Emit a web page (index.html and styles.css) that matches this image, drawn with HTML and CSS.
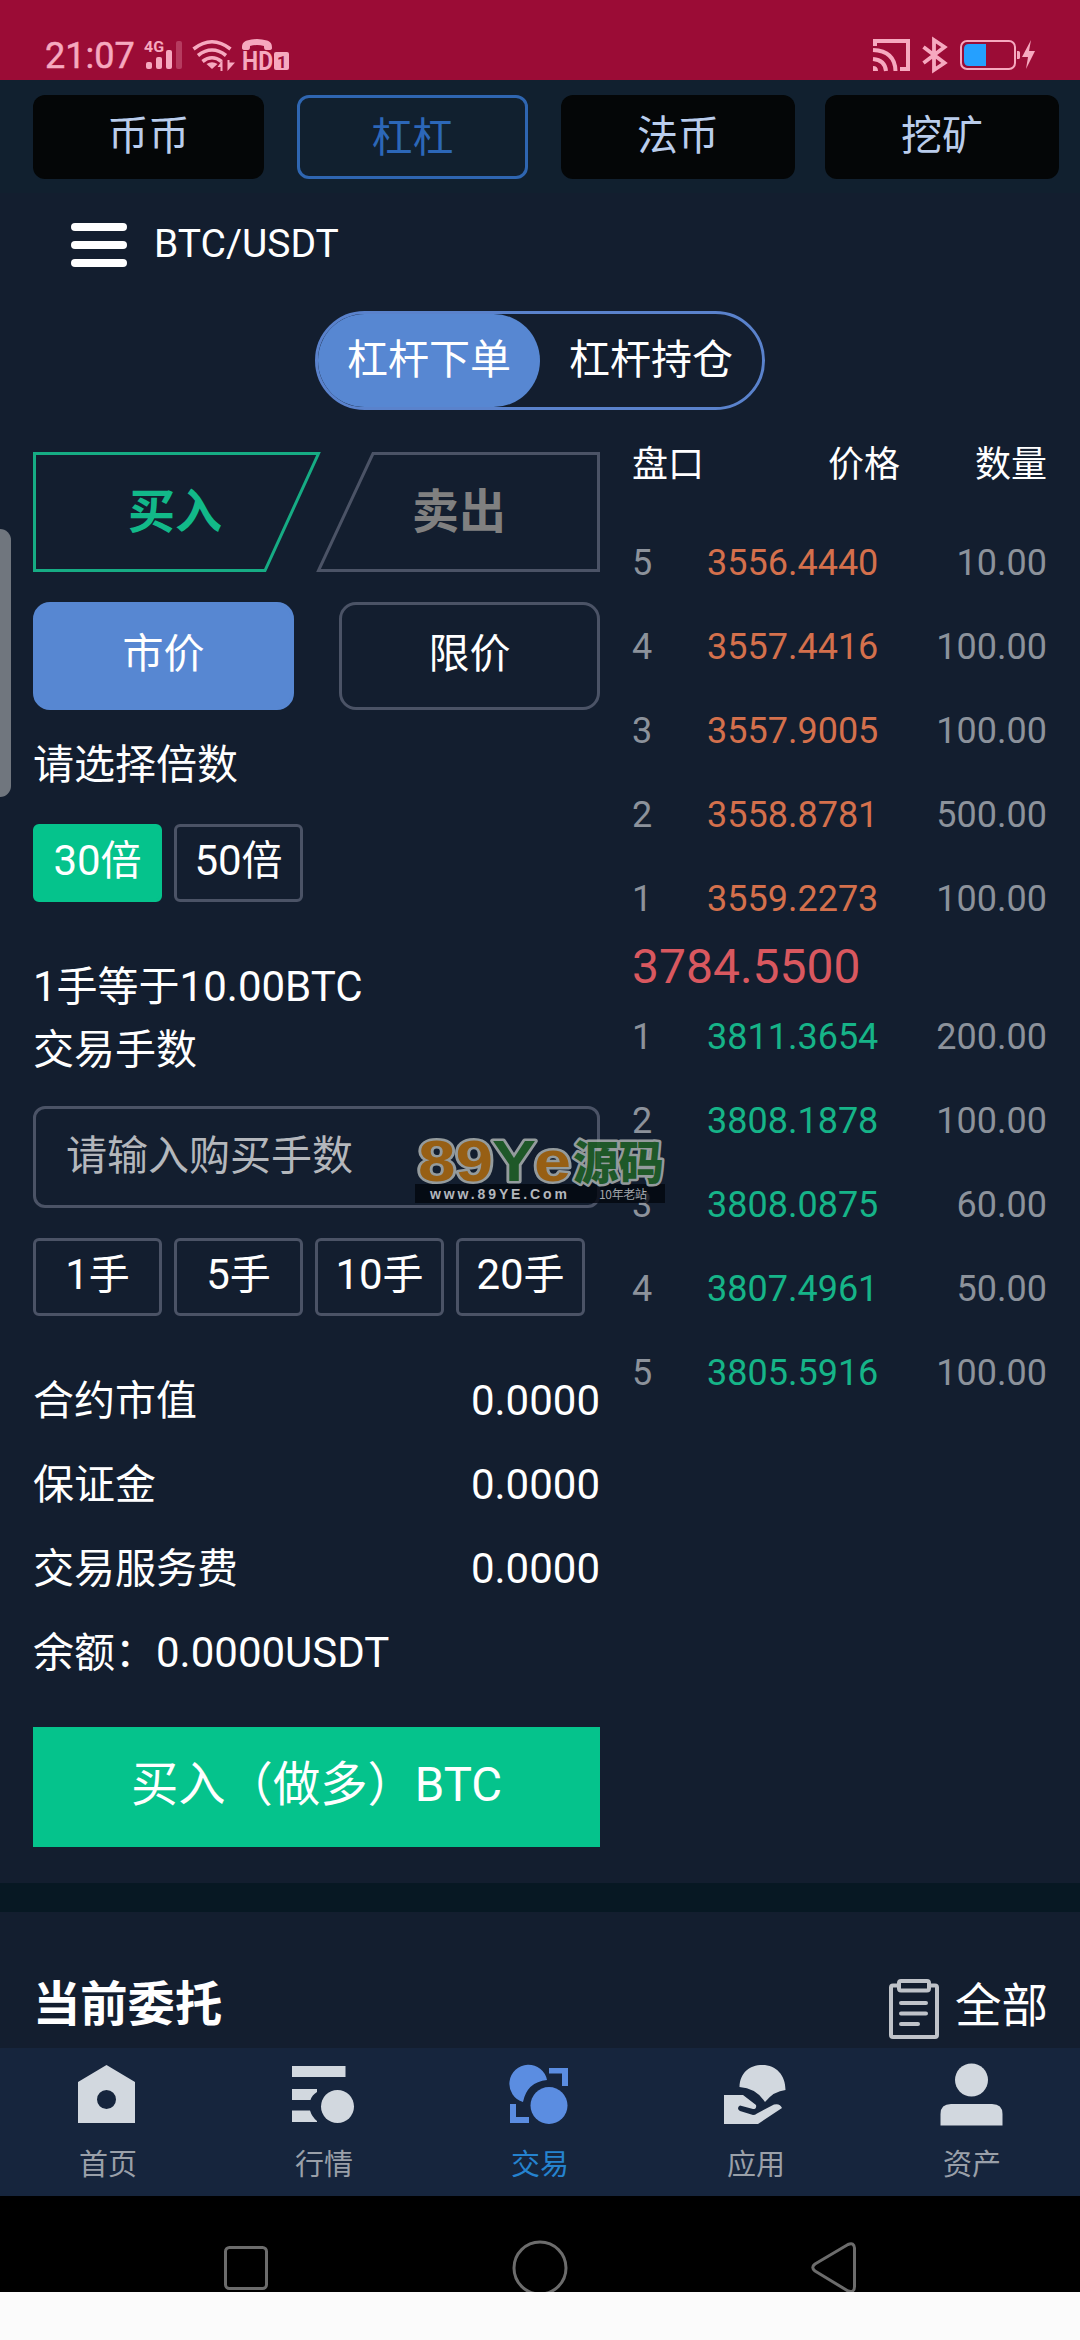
FILE: index.html
```html
<!DOCTYPE html>
<html lang="zh-CN">
<head>
<meta charset="utf-8">
<title>BTC/USDT</title>
<link rel="stylesheet" href="styles.css">
</head>
<body>
<div class="screen">
  <header class="status">
    <span class="clock">21:07</span>
    <svg class="status-left" viewBox="142 36 150 38" width="150" height="38">
      <g fill="#f6a9bf">
        <text class="net" x="144" y="51.500" textLength="20" lengthAdjust="spacingAndGlyphs">4G</text>
        <rect x="146" y="62" width="6" height="7" rx="2"/>
        <rect x="156" y="57" width="6" height="12" rx="2"/>
        <rect x="166" y="50" width="6" height="19" rx="2"/>
        <rect x="176" y="41" width="6" height="28" rx="2" opacity=".3"/>
        <path d="M206.500 64q5.500-3.500 11 0l-5.500 5z"/>
        <path d="M217.500 67l5-7v11h-2v-4zM235 62.500l-7.500 8.500V60h2v2.500z"/>
        <rect x="274" y="52" width="15" height="18" rx="2"/>
        <text class="hd" x="242" y="70" textLength="31" lengthAdjust="spacingAndGlyphs">HD</text>
        <path d="M242 48c0-4 1-6 5-7.500q10-3 20 0c4 1.500 5 3.500 5 7.500q0 2-3 2h-3q-2 0-2-3v-1q-7-2-14 0v1q0 3-2 3h-3q-3 0-3-2z"/>
      </g>
      <g fill="none" stroke="#f6a9bf" stroke-width="3.600">
        <path d="M193.500 49q18.500-14.500 37 0M198 55.500q14-11 28 0M202.500 61.500q9.500-7.500 19 0"/>
      </g>
      <text class="sim" x="277" y="67.500" fill="#9b0c36">1</text>
    </svg>
    <svg class="status-right" viewBox="872 36 164 38" width="164" height="38">
      <g fill="none" stroke="#f6a9bf" stroke-width="4">
        <path d="M875 46v-5h33v28h-8"/>
        <path d="M873 50q22 1 22.500 21M873 59q12 1 13 12"/>
        <path stroke-width="3.800" d="M923.500 47l21 16-10.500 7V40l10.500 7-21 16"/>
        <rect x="961" y="41" width="54" height="28" rx="6" stroke-width="2"/>
      </g>
      <path fill="#f6a9bf" d="M873 66q5 0 5 5h-5zM1017 51h1.500q1.500 0 1.500 1.500v5q0 1.500-1.500 1.500h-1.500zM1031 40l-9 17h6l-2 12 9-18h-6z"/>
      <path fill="#25a0ff" d="M986 44v22h-17q-5 0-5-5V49q0-5 5-5z"/>
    </svg>
  </header>

  <nav class="markets">
    <a class="market">币币</a>
    <a class="market market-on">杠杠</a>
    <a class="market">法币</a>
    <a class="market">挖矿</a>
  </nav>

  <main class="page">
    <div class="pair">
      <div class="burger"><i></i><i></i><i></i></div>
      <span>BTC/USDT</span>
    </div>
    <div class="switch">
      <span class="switch-item switch-on">杠杆下单</span>
      <span class="switch-item">杠杆持仓</span>
    </div>

    <div class="columns">
      <section class="order">
        <div class="sides">
          <div class="side buy">
            <svg viewBox="0 0 288 120" width="288" height="120"><path d="M1.500 1.500H285.500L232 118.500H1.500z"/></svg>
            <span>买入</span>
          </div>
          <div class="side sell">
            <svg viewBox="0 0 284 120" width="284" height="120"><path d="M57 1.500H282.500V118.500H2.500z"/></svg>
            <span>卖出</span>
          </div>
        </div>
        <div class="types">
          <button class="type type-on">市价</button>
          <button class="type">限价</button>
        </div>
        <p class="label">请选择倍数</p>
        <div class="chips">
          <button class="chip chip-on"><span class="num">30</span>倍</button>
          <button class="chip"><span class="num">50</span>倍</button>
        </div>
        <div class="notes">
          <p><span class="num">1</span>手等于<span class="num">10.00BTC</span></p>
          <p>交易手数</p>
        </div>
        <div class="field">请输入购买手数</div>
        <div class="chips lots">
          <button class="chip"><span class="num">1</span>手</button>
          <button class="chip"><span class="num">5</span>手</button>
          <button class="chip"><span class="num">10</span>手</button>
          <button class="chip"><span class="num">20</span>手</button>
        </div>
        <div class="totals">
          <div class="total"><span>合约市值</span><b>0.0000</b></div>
          <div class="total"><span>保证金</span><b>0.0000</b></div>
          <div class="total"><span>交易服务费</span><b>0.0000</b></div>
          <div class="total"><span>余额：<span class="num">0.0000USDT</span></span></div>
        </div>
        <button class="submit">买入（做多）BTC</button>
      </section>

      <section class="book">
        <div class="book-head"><span>盘口</span><span>价格</span><span>数量</span></div>
        <div class="row ask"><span>5</span><b>3556.4440</b><span>10.00</span></div>
        <div class="row ask"><span>4</span><b>3557.4416</b><span>100.00</span></div>
        <div class="row ask"><span>3</span><b>3557.9005</b><span>100.00</span></div>
        <div class="row ask"><span>2</span><b>3558.8781</b><span>500.00</span></div>
        <div class="row ask"><span>1</span><b>3559.2273</b><span>100.00</span></div>
        <div class="last">3784.5500</div>
        <div class="row bid"><span>1</span><b>3811.3654</b><span>200.00</span></div>
        <div class="row bid"><span>2</span><b>3808.1878</b><span>100.00</span></div>
        <div class="row bid"><span>3</span><b>3808.0875</b><span>60.00</span></div>
        <div class="row bid"><span>4</span><b>3807.4961</b><span>50.00</span></div>
        <div class="row bid"><span>5</span><b>3805.5916</b><span>100.00</span></div>
      </section>
    </div>
  </main>

  <section class="current">
    <h2>当前委托</h2>
    <a class="all">
      <svg viewBox="0 0 50 60" width="50" height="60" fill="none" stroke="#bfc3c9" stroke-width="4" stroke-linejoin="round" stroke-linecap="round">
        <path d="M8 6.500H4q-2 0-2 2V56q0 2 2 2H46q2 0 2-2V8.500q0-2-2-2H42"/>
        <rect x="10" y="2" width="30" height="9.500" rx="2"/>
        <path d="M12 24H37M12 34.500H37M12 45H29"/>
      </svg>
      <span>全部</span>
    </a>
  </section>

  <nav class="tabs">
    <a class="tab">
      <svg viewBox="76 2062 64 64" width="64" height="64"><path fill="#d2d8df" fill-rule="evenodd" d="M106.500 2065L135 2082V2123H78V2082zM106.500 2090a9.500 9.500 0 1 0 0 19a9.500 9.500 0 1 0 0-19z"/></svg>
      <span>首页</span>
    </a>
    <a class="tab">
      <svg viewBox="292 2062 64 64" width="64" height="64"><g fill="#d2d8df"><path d="M292 2066H345.500V2077H292zM292 2089H317V2092Q312 2095 310.500 2100H292zM292 2110.500H310Q312 2117 317 2121V2122H292z"/><circle cx="337.500" cy="2106.500" r="16.500"/></g></svg>
      <span>行情</span>
    </a>
    <a class="tab tab-on">
      <svg viewBox="507 2062 64 64" width="64" height="64"><g fill="#5b8de1"><path d="M522 2102A19 19 0 1 1 546 2080Q526 2082 522 2102z"/><circle cx="548" cy="2105.500" r="18.500"/><path d="M548 2068H567V2086H561V2073.500H548zM509 2104H515V2117H528V2123H509z"/></g></svg>
      <span>交易</span>
    </a>
    <a class="tab">
      <svg viewBox="723 2062 64 64" width="64" height="64"><g fill="#d2d8df"><path d="M738.500 2087C739 2073 748 2065 761.500 2065C775 2065 784.500 2075 784.500 2090Q773 2091 764 2102Q755 2088 738.500 2087z"/><path d="M723 2095H742L755 2105Q756 2109 752 2109L739 2105.500Q735 2108 739 2111L752 2115Q754 2115 756 2113.500L773 2104.500Q779 2103 781 2108L757 2124H723z"/></g></svg>
      <span>应用</span>
    </a>
    <a class="tab">
      <svg viewBox="939 2062 64 64" width="64" height="64"><g fill="#d2d8df"><circle cx="970.500" cy="2080" r="16.500"/><path d="M939.500 2125.500V2114Q939.500 2104 950 2104H991Q1001.500 2104 1001.500 2114V2125.500z"/></g></svg>
      <span>资产</span>
    </a>
  </nav>

  <footer class="sysnav">
    <svg viewBox="0 0 1080 100" width="1080" height="100" fill="none" stroke="#6c6c6c" stroke-width="3">
      <rect x="225.500" y="51.500" width="41" height="41" rx="4"/>
      <circle cx="540" cy="72" r="26"/>
      <path stroke-linejoin="round" d="M848 48.500L815 68Q810.500 71.500 815 75L848 95Q854.500 97 854.500 90.500V52Q854 46 848 48.500z"/>
    </svg>
  </footer>

  <div class="edge-handle"></div>

  <svg class="watermark" viewBox="0 0 252 70" width="252" height="70">
    <rect x="0" y="49" width="250" height="19" fill="#03070f" opacity=".9"/>
    <g class="wm-logo">
      <text class="wm-orange" x="3" y="46" textLength="75" lengthAdjust="spacingAndGlyphs">89</text>
      <text class="wm-green" x="77" y="46" textLength="44" lengthAdjust="spacingAndGlyphs">Y</text>
      <text class="wm-orange" x="119" y="46" textLength="37" lengthAdjust="spacingAndGlyphs">e</text>
      <text class="wm-green wm-cjk" x="158" y="44" textLength="91" lengthAdjust="spacingAndGlyphs">源码</text>
    </g>
    <text class="wm-url" x="15" y="64" textLength="137">www.89YE.Com</text>
    <text class="wm-note" x="184" y="64" textLength="48">10年老站</text>
  </svg>
</div>
</body>
</html>
```
FILE: styles.css
```css
* { box-sizing: border-box; }
body {
  margin: 0;
  background: #fbfbfb;
  color: #fff;
  font-family: Roboto, "Noto Sans CJK SC", sans-serif;
  font-size: 41px;
}
p, h2 { margin: 0; }
svg { display: block; flex: none; overflow: visible; }
button {
  margin: 0;
  padding: 0 0 3px;
  border: 3px solid #4b5366;
  background: none;
  color: #fff;
  font: inherit;
  line-height: 1;
}
.num { font-size: 42px; line-height: 0; }
.screen {
  position: relative;
  width: 1080px;
  height: 2340px;
  overflow: hidden;
  display: flex;
  flex-direction: column;
}

/* status bar */
.status {
  height: 80px;
  padding: 34px 44px 0 45px;
  background: #9b0c36;
  display: flex;
  flex: none;
}
.clock { width: 97px; font-size: 36px; line-height: 45px; color: #f6a9bf; white-space: nowrap; -webkit-text-stroke: .5px #f6a9bf; }
.status-left { margin-top: 2px; }
.status-right { margin: 2px 0 0 auto; }
.net { font: 700 14px Roboto, sans-serif; }
.hd { font: 700 25px Roboto, sans-serif; }
.sim { font: 700 17px Roboto, sans-serif; }

/* market tabs */
.markets {
  height: 113px;
  padding: 15px 21px 0 33px;
  background: #11202f;
  display: grid;
  grid-template-columns: 264px 264px 264px 234px;
  flex: none;
}
.market {
  height: 84px;
  margin-right: 30px;
  border-radius: 12px;
  background: #040607;
  color: #bacdec;
  line-height: 83px;
  text-align: center;
}
.market:nth-child(-n+2) { margin-right: 33px; }
.market:last-child { margin-right: 0; }
.market-on { background: none; border: 3px solid #2f66b1; color: #2c67b8; line-height: 80px; }

/* trading page */
.page { height: 1690px; background: #131e2f; flex: none; display: flex; flex-direction: column; }
.pair { height: 118px; padding: 0 0 14px 71px; display: flex; align-items: center; gap: 27px; font-size: 39px; }
.pair span { line-height: 46px; margin-bottom: 2px; }
.burger { width: 56px; display: flex; flex-direction: column; gap: 10px; }
.burger i { height: 8px; border-radius: 4px; background: #fff; }
.switch {
  width: 450px;
  height: 99px;
  margin-left: 315px;
  border: 3px solid #5a82cc;
  border-radius: 50px;
  display: flex;
  flex: none;
  line-height: 93px;
  text-align: center;
}
.switch-item { width: 222px; }
.switch-on { background: #5787d2; border-radius: 50px; }

.columns { display: flex; justify-content: space-between; padding: 0 33px; }
.order { width: 567px; padding-top: 42px; }
.sides { display: flex; height: 120px; }
.side { display: grid; height: 120px; font-size: 47px; font-weight: 700; line-height: 120px; }
.side svg, .side span { grid-area: 1 / 1; }
.side path { fill: none; stroke-width: 3; }
.buy { width: 283px; color: #12b989; }
.buy path { stroke: #16ac84; }
.sell { color: #808080; }
.sell path { stroke: #4b5366; }
.buy span { padding-left: 95px; }
.sell span { padding-left: 96px; }
.types { display: flex; justify-content: space-between; margin-top: 30px; }
.type { width: 261px; height: 108px; border-radius: 17px; }
.type-on { background: #5787d2; border-color: #5787d2; }
.label { margin-top: 25px; line-height: 60px; }
.chips { display: flex; gap: 12px; margin-top: 29px; }
.chip { width: 129px; height: 78px; padding: 0 0 3px; border-radius: 6px; white-space: nowrap; }
.chip-on { background: #05c38c; border-color: #05c38c; }
.notes { margin-top: 54px; line-height: 63px; }
.notes p { height: 63px; }
.field {
  height: 102px;
  margin-top: 24px;
  padding-left: 30px;
  border: 3px solid #4b5366;
  border-radius: 12px;
  color: #b4b7bc;
  line-height: 94px;
}
.lots { margin-top: 30px; }
.totals { margin-top: 43px; }
.total { display: flex; justify-content: space-between; height: 84px; line-height: 84px; }
.total b { font-size: 42px; font-weight: 400; line-height: 83px; }
.submit { width: 567px; height: 120px; margin-top: 32px; border: 0; background: #05c38c; font-size: 47.300px; }

/* order book */
.book { width: 415px; padding-top: 25px; font-size: 36px; }
.book-head { display: grid; grid-template-columns: 120px 148px 147px; line-height: 60px; margin-bottom: 26px; }
.book-head span + span { text-align: right; }
.row { display: grid; grid-template-columns: 75px 190px 150px; line-height: 84px; color: #8c929b; }
.row b { font-weight: 400; }
.row span:last-child { text-align: right; }
.ask b { color: #d4704c; }
.bid b { color: #16b488; }
.last { height: 54px; color: #d9585f; font-size: 48px; line-height: 52px; }

/* current orders */
.current {
  height: 165px;
  padding: 0 32px 0 33px;
  border-top: 29px solid #071823;
  background: #131e2f;
  display: flex;
  align-items: flex-start;
  justify-content: space-between;
  flex: none;
  font-size: 46.500px;
  line-height: 60px;
}
.current h2 { margin-top: 63px; font-size: 47.300px; font-weight: 700; }
.all { margin-top: 67px; display: flex; gap: 16px; align-items: flex-start; }
.all span { margin-top: -3px; }

/* bottom tabs */
.tabs { height: 148px; padding-top: 14px; background: #16253d; display: grid; grid-template-columns: repeat(5, 1fr); flex: none; }
.tab { display: flex; flex-direction: column; align-items: center; color: #9aa0a9; font-size: 29px; }
.tab span { margin-top: 17px; line-height: 44px; }
.tab-on { color: #2583cf; }

.sysnav { height: 96px; background: #000; flex: none; overflow: hidden; }

/* overlays */
.edge-handle { position: absolute; left: 0; top: 529px; width: 11px; height: 268px; border-radius: 0 11px 11px 0; background: #70767e; }
.watermark { position: absolute; left: 415px; top: 1135px; opacity: .9; }
.wm-logo text { font: 700 58px "Liberation Sans", sans-serif; stroke: #a3a9aa; stroke-width: 5px; stroke-linejoin: round; paint-order: stroke; }
.wm-logo .wm-cjk { font: 900 46px "Noto Sans CJK SC", sans-serif; }
.wm-logo .wm-orange { fill: #a66712; }
.wm-logo .wm-green { fill: #205f28; }
.wm-url { font: 700 14px "Liberation Sans", sans-serif; fill: #c5c8cc; }
.wm-note { font: 12px "Noto Sans CJK SC", sans-serif; fill: #b0b4b8; }
```
